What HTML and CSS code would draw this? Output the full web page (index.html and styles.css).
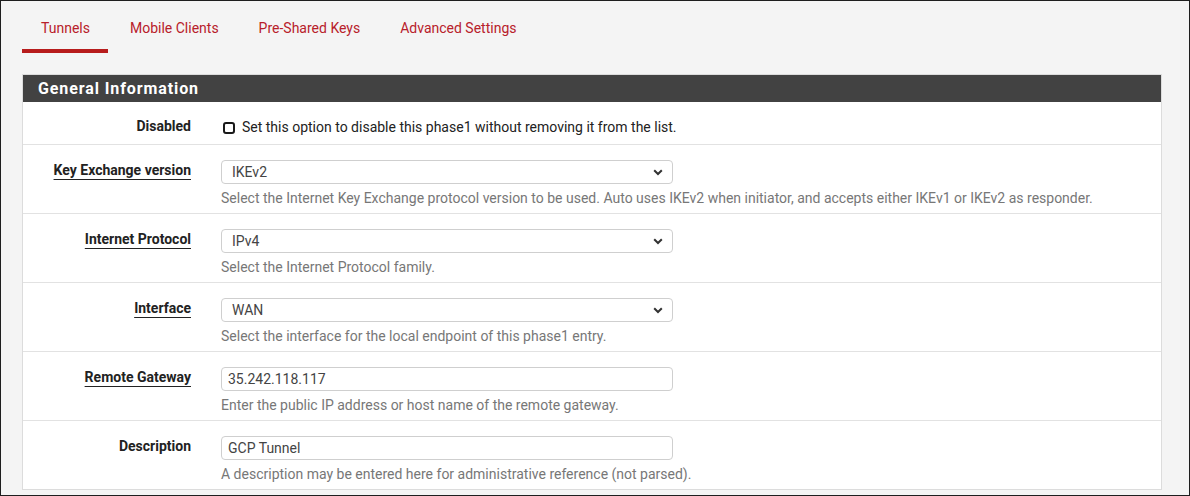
FILE: index.html
```html
<!DOCTYPE html>
<html>
<head>
<meta charset="utf-8">
<link rel="stylesheet" href="styles.css">
</head>
<body>
<div class="frame">
  <nav class="tabs">
    <a class="tab active">Tunnels</a>
    <a class="tab">Mobile Clients</a>
    <a class="tab">Pre-Shared Keys</a>
    <a class="tab">Advanced Settings</a>
  </nav>
  <section class="panel">
    <h2 class="panel-title">General Information</h2>
    <div class="row row-first">
      <div class="label">Disabled</div>
      <div class="field check-field">
        <span class="checkbox"></span>
        <span>Set this option to disable this phase1 without removing it from the list.</span>
      </div>
    </div>
    <div class="row">
      <div class="label"><span class="req">Key Exchange version</span></div>
      <div class="field">
        <div class="select"><span>IKEv2</span><svg class="chev" width="10" height="7" viewBox="0 0 10 7"><path d="M1.2 1.2 L5 5 L8.8 1.2" fill="none" stroke="#333" stroke-width="2"/></svg></div>
        <div class="help">Select the Internet Key Exchange protocol version to be used. Auto uses IKEv2 when initiator, and accepts either IKEv1 or IKEv2 as responder.</div>
      </div>
    </div>
    <div class="row">
      <div class="label"><span class="req">Internet Protocol</span></div>
      <div class="field">
        <div class="select"><span>IPv4</span><svg class="chev" width="10" height="7" viewBox="0 0 10 7"><path d="M1.2 1.2 L5 5 L8.8 1.2" fill="none" stroke="#333" stroke-width="2"/></svg></div>
        <div class="help">Select the Internet Protocol family.</div>
      </div>
    </div>
    <div class="row">
      <div class="label"><span class="req">Interface</span></div>
      <div class="field">
        <div class="select"><span>WAN</span><svg class="chev" width="10" height="7" viewBox="0 0 10 7"><path d="M1.2 1.2 L5 5 L8.8 1.2" fill="none" stroke="#333" stroke-width="2"/></svg></div>
        <div class="help">Select the interface for the local endpoint of this phase1 entry.</div>
      </div>
    </div>
    <div class="row">
      <div class="label"><span class="req">Remote Gateway</span></div>
      <div class="field">
        <div class="input">35.242.118.117</div>
        <div class="help">Enter the public IP address or host name of the remote gateway.</div>
      </div>
    </div>
    <div class="row">
      <div class="label">Description</div>
      <div class="field">
        <div class="input">GCP Tunnel</div>
        <div class="help">A description may be entered here for administrative reference (not parsed).</div>
      </div>
    </div>
  </section>
</div>
</body>
</html>
```

FILE: styles.css
```css
* { box-sizing: border-box; }
html, body { margin: 0; padding: 0; }
body {
  font-family: Roboto, "Liberation Sans", sans-serif;
  font-size: 14px;
  color: #222;
  background: #f4f4f4;
}
.frame {
  width: 1190px;
  height: 496px;
  border: 1px solid #1e1e1e;
  background: #f4f4f4;
  overflow: hidden;
  padding-left: 21px;
}
.tabs {
  display: flex;
  gap: 3px;
  height: 52px;
}
.tab {
  display: block;
  padding: 17px 18px 11px 19px;
  line-height: 20px;
  color: #b8202a;
  border-bottom: 4px solid transparent;
  text-decoration: none;
}
.tab.active {
  border-bottom-color: #b71c1c;
}
.panel {
  margin-top: 21px;
  width: 1140px;
  background: #fff;
  border: 1px solid #dcdcdc;
}
.panel-title {
  margin: 0;
  height: 27px;
  background: #424242;
  color: #fff;
  font-size: 16px;
  font-weight: 700;
  line-height: 27px;
  padding-left: 15px;
  letter-spacing: 0.9px;
}
.row {
  display: flex;
  border-top: 1px solid #e2e2e2;
  padding: 15px 0 5px;
  height: 69px;
}
.row-first {
  border-top: none;
  height: 42px;
  padding: 15px 0 7px;
}
.label {
  width: 183px;
  flex: none;
  padding-right: 15px;
  padding-top: 1px;
  text-align: right;
  font-weight: 700;
  line-height: 18px;
}
.row-first .label { padding-top: 0; }
.req {
  text-decoration: underline;
  text-underline-offset: 4px;
  text-decoration-thickness: 1px;
}
.field {
  padding-left: 15px;
  flex: 1;
}
.check-field {
  display: flex;
  align-items: center;
  line-height: 20px;
  height: 20px;
}
.checkbox {
  width: 12px;
  height: 12px;
  border: 2px solid #1a1a1a;
  border-radius: 3px;
  margin-left: 2px;
  margin-right: 7px;
  margin-top: 1px;
  flex: none;
}
.select, .input {
  width: 452px;
  height: 24px;
  border: 1px solid #cfcfcf;
  border-radius: 4px;
  line-height: 22px;
  color: #444;
  background: #fff;
}
.select {
  display: flex;
  align-items: center;
  justify-content: space-between;
  padding: 0 9px 0 10px;
}
.chev { display: block; }
.input {
  padding-left: 6px;
}
.help {
  margin-top: 4px;
  line-height: 20px;
  color: #777;
}
```
